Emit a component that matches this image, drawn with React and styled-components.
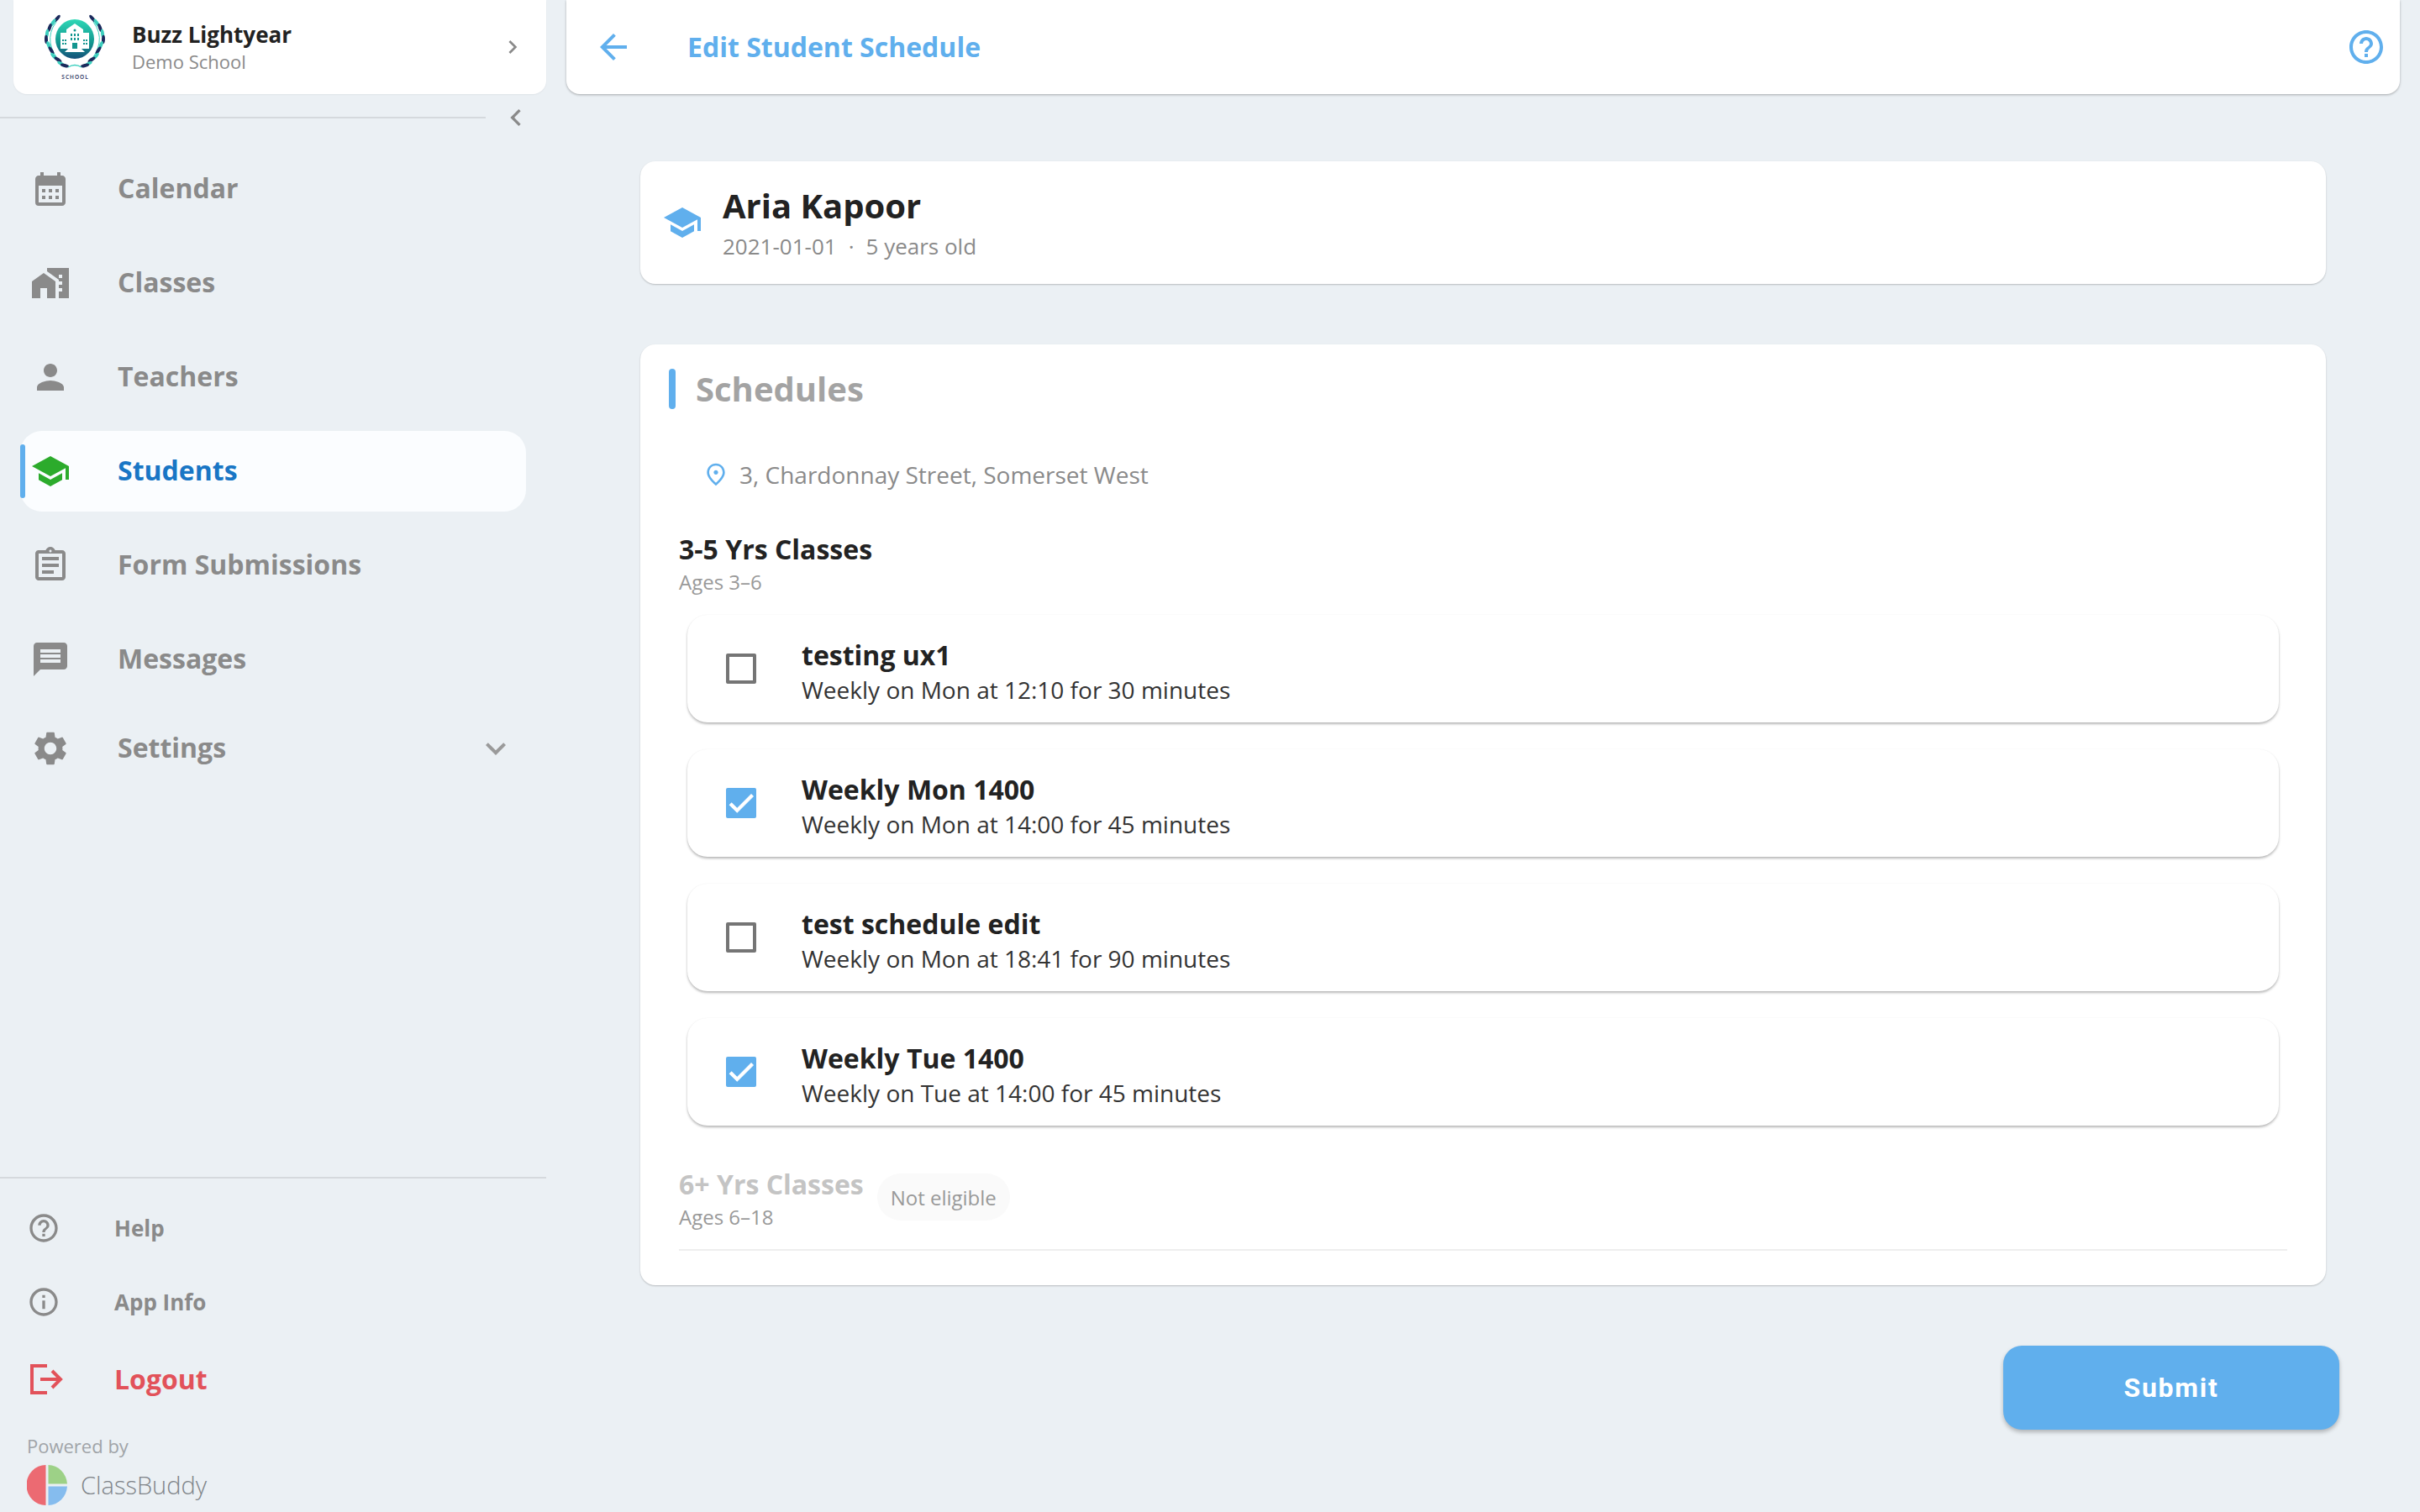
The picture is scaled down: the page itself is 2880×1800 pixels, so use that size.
import React from 'react';
import styled, { createGlobalStyle } from 'styled-components';
import {
  MdArrowBack,
  MdCalendarMonth,
  MdCheck,
  MdChevronLeft,
  MdChevronRight,
  MdExpandMore,
  MdHelpOutline,
  MdInfoOutline,
  MdMapsHomeWork,
  MdMessage,
  MdOutlineAssignment,
  MdOutlinePlace,
  MdPerson,
  MdSchool,
  MdSettings,
} from 'react-icons/md';

const blue = '#60afed';
const grey = '#8a8a8a';
const ink = '#222222';

const GlobalStyle = createGlobalStyle`
  html, body {
    margin: 0;
    padding: 0;
    background: #ebf0f4;
    font-family: 'Open Sans', 'Noto Sans', sans-serif;
  }
  * {
    box-sizing: border-box;
  }
`;

const Page = styled.div`
  display: flex;
  width: 2880px;
  height: 1800px;
  overflow: hidden;
  background: #ebf0f4;
`;

const Sidebar = styled.aside`
  display: flex;
  flex-direction: column;
  width: 674px;
  height: 100%;
  flex-shrink: 0;
`;

const ProfileCard = styled.div`
  display: flex;
  align-items: center;
  width: 634px;
  height: 112px;
  margin-left: 16px;
  padding: 0 24px 0 36px;
  background: #fff;
  border-radius: 0 0 16px 16px;
  box-shadow: 0 1px 2px rgba(0, 0, 0, 0.05);
  color: ${grey};
`;

const ProfileText = styled.div`
  display: flex;
  flex-direction: column;
  flex: 1;
  margin-left: 31px;
`;

const ProfileName = styled.span`
  font-size: 26px;
  line-height: 34px;
  font-weight: 700;
  color: ${ink};
  margin-top: -1px;
`;

const ProfileSchool = styled.span`
  font-size: 22px;
  line-height: 30px;
  font-weight: 400;
  color: ${grey};
`;

const CollapseRow = styled.div`
  display: flex;
  align-items: center;
  height: 56px;
  color: ${grey};
`;

const Rule = styled.div`
  height: 2px;
  width: ${(p) => p.$width}px;
  background: #d5d9dd;
`;

const CollapseButton = styled.span`
  display: flex;
  margin-left: 16px;
  margin-top: -1px;
`;

const NavList = styled.nav`
  display: flex;
  flex-direction: column;
  gap: 16px;
  margin-top: 9px;
`;

const NavItem = styled.div`
  position: relative;
  display: flex;
  align-items: center;
  width: 602px;
  height: 96px;
  margin-left: 24px;
  margin-top: ${(p) => p.$nudge || 0}px;
  padding-left: 12px;
  border-radius: 26px;
  background: ${(p) => (p.$active ? '#fbfdff' : 'transparent')};
  color: ${(p) => (p.$active ? '#1976c5' : grey)};
  svg {
    flex-shrink: 0;
    color: ${(p) => (p.$active ? '#2cab2c' : grey)};
  }
`;

const ActiveMark = styled.span`
  position: absolute;
  left: 0;
  top: 16px;
  width: 6px;
  height: 64px;
  border-radius: 3px;
  background: ${blue};
`;

const NavLabel = styled.span`
  flex: 1;
  margin-left: 56px;
  padding-bottom: 2px;
  font-size: 32px;
  line-height: 44px;
  font-weight: 700;
`;

const NavChevron = styled.span`
  display: flex;
  margin-right: 12px;
  svg {
    color: #9a9a9a;
  }
`;

const SidebarFooter = styled.div`
  display: flex;
  flex-direction: column;
  margin-top: auto;
  padding-bottom: 8px;
`;

const FooterItems = styled.div`
  display: flex;
  flex-direction: column;
  padding-top: 15px;
`;

const FooterItem = styled.div`
  display: flex;
  align-items: center;
  height: ${(p) => (p.$danger ? 96 : 88)}px;
  padding-left: ${(p) => (p.$danger ? 36 : 32)}px;
  color: ${(p) => (p.$danger ? '#e2525a' : grey)};
`;

const FooterLabel = styled.span`
  margin-left: ${(p) => (p.$danger ? 60 : 64)}px;
  font-size: ${(p) => (p.$danger ? 32 : 26)}px;
  line-height: 40px;
  font-weight: 700;
`;

const PoweredBy = styled.div`
  margin: 16px 0 0 32px;
  font-size: 22px;
  line-height: 30px;
  font-weight: 400;
  color: #a0a4a8;
`;

const BrandRow = styled.div`
  display: flex;
  align-items: center;
  height: 48px;
  margin: 8px 0 0 32px;
`;

const BrandName = styled.span`
  margin-left: 16px;
  font-size: 29px;
  line-height: 40px;
  font-weight: 300;
  color: #7f8489;
`;

const Main = styled.main`
  display: flex;
  flex-direction: column;
  flex: 1;
  min-width: 0;
`;

const TopBar = styled.header`
  display: flex;
  align-items: center;
  height: 112px;
  margin-right: 24px;
  padding: 0 16px 0 32px;
  background: #fff;
  border-radius: 0 0 16px 16px;
  box-shadow: 0 1px 3px rgba(0, 0, 0, 0.3);
  color: ${blue};
`;

const TopTitle = styled.h1`
  flex: 1;
  margin: 0 0 0 64px;
  font-size: 32px;
  line-height: 44px;
  font-weight: 700;
`;

const Content = styled.div`
  display: flex;
  flex-direction: column;
  padding: 80px 112px 0 88px;
`;

const Card = styled.section`
  background: #fff;
  border-radius: 18px;
  box-shadow: 0 1px 2px rgba(0, 0, 0, 0.22);
`;

const StudentCard = styled(Card)`
  display: flex;
  align-items: center;
  height: 146px;
  padding-left: 26px;
  margin-bottom: 72px;
  color: ${blue};
`;

const StudentText = styled.div`
  display: flex;
  flex-direction: column;
  margin-left: 24px;
  padding-bottom: 2px;
`;

const StudentName = styled.h2`
  margin: 0;
  font-size: 40px;
  line-height: 56px;
  font-weight: 700;
  color: ${ink};
`;

const StudentMeta = styled.div`
  display: flex;
  gap: 14px;
  margin-top: 2px;
  font-size: 26px;
  line-height: 36px;
  color: ${grey};
`;

const ScheduleCard = styled(Card)`
  display: flex;
  flex-direction: column;
  padding: 29px 46px 41px;
`;

const SectionHeader = styled.div`
  display: flex;
  align-items: center;
  height: 48px;
  margin-left: -12px;
`;

const SectionMark = styled.span`
  width: 8px;
  height: 48px;
  border-radius: 4px;
  background: ${blue};
`;

const SectionTitle = styled.h3`
  margin: 0 0 0 24px;
  font-size: 40px;
  line-height: 48px;
  font-weight: 700;
  color: #a3a3a3;
`;

const Address = styled.div`
  display: flex;
  align-items: center;
  height: 40px;
  margin: 58px 0 0 28px;
  color: ${blue};
`;

const AddressText = styled.span`
  margin-left: 12px;
  font-size: 28px;
  line-height: 40px;
  color: ${grey};
`;

const GroupHeading = styled.div`
  font-size: 32px;
  line-height: 44px;
  font-weight: 700;
  color: ${(p) => (p.$muted ? '#c4c4c4' : ink)};
  margin-top: ${(p) => (p.$first ? 47 : 0)}px;
`;

const GroupAges = styled.div`
  font-size: 24px;
  line-height: 34px;
  color: #999;
`;

const RowList = styled.div`
  display: flex;
  flex-direction: column;
  gap: 32px;
  margin: 22px 10px 0;
`;

const Row = styled.label`
  display: flex;
  align-items: center;
  height: 128px;
  padding-left: 46px;
  background: #fff;
  border-radius: 24px;
  box-shadow: 0 2px 3px rgba(0, 0, 0, 0.28), 0 0 2px rgba(0, 0, 0, 0.03);
`;

const CheckBox = styled.span`
  display: flex;
  align-items: center;
  justify-content: center;
  width: 36px;
  height: 36px;
  flex-shrink: 0;
  border-radius: 2px;
  border: ${(p) => (p.$checked ? 'none' : '4px solid #757575')};
  background: ${(p) => (p.$checked ? blue : 'transparent')};
  color: #fff;
  svg {
    flex-shrink: 0;
    stroke: currentColor;
    stroke-width: 0.7;
  }
`;

const RowText = styled.div`
  display: flex;
  flex-direction: column;
  margin-left: 54px;
  padding-top: 6px;
`;

const RowTitle = styled.span`
  font-size: 32px;
  line-height: 44px;
  font-weight: 700;
  color: ${ink};
`;

const RowDetail = styled.span`
  font-size: 28px;
  line-height: 38px;
  color: #333;
`;

const IneligibleGroup = styled.div`
  display: flex;
  align-items: center;
  margin-top: 48px;
`;

const Chip = styled.span`
  display: flex;
  align-items: center;
  justify-content: center;
  width: 158px;
  height: 56px;
  margin: -4px 0 0 16px;
  border-radius: 28px;
  background: #fafafa;
  font-size: 24px;
  color: #999;
`;

const Divider = styled.div`
  height: 2px;
  margin-top: 21px;
  background: #eeeeee;
`;

const SubmitRow = styled.div`
  display: flex;
  justify-content: flex-end;
  margin: 72px -16px 0 0;
`;

const SubmitButton = styled.button`
  width: 400px;
  height: 100px;
  border: none;
  border-radius: 22px;
  background: ${blue};
  color: #fff;
  font-family: Roboto, sans-serif;
  font-size: 32px;
  font-weight: 700;
  letter-spacing: 1.7px;
  box-shadow: 0 3px 5px rgba(0, 0, 0, 0.25);
`;

const navItems = [
  { label: 'Calendar', Icon: MdCalendarMonth },
  { label: 'Classes', Icon: MdMapsHomeWork },
  { label: 'Teachers', Icon: MdPerson },
  { label: 'Students', Icon: MdSchool, active: true },
  { label: 'Form Submissions', Icon: MdOutlineAssignment },
  { label: 'Messages', Icon: MdMessage },
  { label: 'Settings', Icon: MdSettings, nudge: -6, expandable: true },
];

const schedules = [
  { title: 'testing ux1', detail: 'Weekly on Mon at 12:10 for 30 minutes' },
  { title: 'Weekly Mon 1400', detail: 'Weekly on Mon at 14:00 for 45 minutes', checked: true },
  { title: 'test schedule edit', detail: 'Weekly on Mon at 18:41 for 90 minutes' },
  { title: 'Weekly Tue 1400', detail: 'Weekly on Tue at 14:00 for 45 minutes', checked: true },
];

const navy = '#1b2a5c';
const teal = '#3ccfbe';

// leaves of one half of the wreath, drawn for the left side and mirrored
const leaves = [
  { x: 67, y: 24, r: 40, c: navy },
  { x: 62, y: 29, r: 35, c: teal },
  { x: 58, y: 35, r: 20, c: navy },
  { x: 55, y: 42, r: 8, c: teal },
  { x: 54, y: 49, r: -2, c: navy },
  { x: 57, y: 56, r: -22, c: teal },
  { x: 60, y: 62, r: -32, c: navy },
  { x: 63, y: 69, r: -40, c: teal },
  { x: 68, y: 73, r: -55, c: navy },
  { x: 72, y: 78, r: -60, c: teal },
  { x: 76, y: 80, r: -75, c: navy },
];

function SchoolLogo() {
  return (
    <svg width='74' height='80' viewBox='51 18 74 80' aria-hidden='true'>
      <defs>
        <linearGradient id='crest' x1='0' y1='0' x2='0' y2='1'>
          <stop offset='0' stopColor='#2ed8b6' />
          <stop offset='0.6' stopColor='#12958f' />
          <stop offset='1' stopColor='#15517a' />
        </linearGradient>
      </defs>
      <path d='M66 28 Q48 52 74 80' fill='none' stroke={teal} strokeWidth='1' />
      <path d='M110 28 Q128 52 102 80' fill='none' stroke={teal} strokeWidth='1' />
      {leaves.map((l, i) => (
        <g key={i}>
          <ellipse cx={l.x} cy={l.y} rx='2' ry='5.2' fill={l.c} transform={`rotate(${l.r} ${l.x} ${l.y})`} />
          <ellipse cx={176 - l.x} cy={l.y} rx='2' ry='5.2' fill={l.c} transform={`rotate(${-l.r} ${176 - l.x} ${l.y})`} />
        </g>
      ))}
      <path d='M80 82 Q88 77 96 82' fill='none' stroke={teal} strokeWidth='1.4' />
      <ellipse cx='88' cy='48.5' rx='23' ry='23.5' fill='url(#crest)' />
      <path d='M88 30 L98 37 V41 H105 V60 H71 V41 H78 V37 Z' fill='#fff' />
      <circle cx='88' cy='38' r='1.5' fill='#12958f' />
      <g fill='#12958f'>
        <rect x='83' y='42' width='2' height='3' />
        <rect x='87' y='42' width='2' height='3' />
        <rect x='91' y='42' width='2' height='3' />
        <rect x='83' y='47' width='2' height='3' />
        <rect x='87' y='47' width='2' height='3' />
        <rect x='91' y='47' width='2' height='3' />
        <rect x='73' y='49' width='2' height='2' />
        <rect x='76' y='49' width='2' height='2' />
        <rect x='73' y='53' width='2' height='2' />
        <rect x='76' y='53' width='2' height='2' />
        <rect x='98' y='49' width='2' height='2' />
        <rect x='101' y='49' width='2' height='2' />
        <rect x='98' y='53' width='2' height='2' />
        <rect x='101' y='53' width='2' height='2' />
        <rect x='85' y='53' width='6' height='7' />
      </g>
      <path d='M80 60 H96 L100 64 H76 Z' fill='#fff' />
      <text x='88.5' y='96' textAnchor='middle' fontFamily='Open Sans, sans-serif' fontWeight='600' fontSize='6.5' letterSpacing='1' fill={navy}>
        SCHOOL
      </text>
    </svg>
  );
}

function LogoutIcon() {
  return (
    <svg width='40' height='40' viewBox='0 0 40 40' fill='none' stroke='currentColor' strokeWidth='4' aria-hidden='true'>
      <path d='M20 4H2V36H20' />
      <path d='M12 20H36' />
      <path d='M26 10L36 20L26 30' />
    </svg>
  );
}

function BrandLogo() {
  return (
    <svg width='48' height='48' viewBox='0 0 48 48' aria-hidden='true'>
      <path d='M22.5 0 A 23 24 0 0 0 22.5 48 Z' fill='#ec6a72' />
      <path d='M25.5 0 A 23 24 0 0 1 48 22.5 H25.5 Z' fill='#9dd187' />
      <path d='M25.5 48 A 23 24 0 0 0 48 25.5 H25.5 Z' fill='#85bcee' />
    </svg>
  );
}

export default function App() {
  return (
    <Page>
      <GlobalStyle />
      <Sidebar>
        <ProfileCard>
          <SchoolLogo />
          <ProfileText>
            <ProfileName>Buzz Lightyear</ProfileName>
            <ProfileSchool>Demo School</ProfileSchool>
          </ProfileText>
          <MdChevronRight size={32} />
        </ProfileCard>
        <CollapseRow>
          <Rule $width={578} />
          <CollapseButton>
            <MdChevronLeft size={40} />
          </CollapseButton>
        </CollapseRow>
        <NavList>
          {navItems.map(({ label, Icon, active, nudge, expandable }) => (
            <NavItem key={label} $active={active} $nudge={nudge}>
              {active && <ActiveMark />}
              <Icon size={48} />
              <NavLabel>{label}</NavLabel>
              {expandable && (
                <NavChevron>
                  <MdExpandMore size={48} />
                </NavChevron>
              )}
            </NavItem>
          ))}
        </NavList>
        <SidebarFooter>
          <Rule $width={650} />
          <FooterItems>
            <FooterItem>
              <MdHelpOutline size={40} />
              <FooterLabel>Help</FooterLabel>
            </FooterItem>
            <FooterItem>
              <MdInfoOutline size={40} />
              <FooterLabel>App Info</FooterLabel>
            </FooterItem>
            <FooterItem $danger>
              <LogoutIcon />
              <FooterLabel $danger>Logout</FooterLabel>
            </FooterItem>
          </FooterItems>
          <PoweredBy>Powered by</PoweredBy>
          <BrandRow>
            <BrandLogo />
            <BrandName>ClassBuddy</BrandName>
          </BrandRow>
        </SidebarFooter>
      </Sidebar>
      <Main>
        <TopBar>
          <MdArrowBack size={48} />
          <TopTitle>Edit Student Schedule</TopTitle>
          <MdHelpOutline size={48} />
        </TopBar>
        <Content>
          <StudentCard>
            <MdSchool size={48} />
            <StudentText>
              <StudentName>Aria Kapoor</StudentName>
              <StudentMeta>
                <span>2021-01-01</span>
                <span>·</span>
                <span>5 years old</span>
              </StudentMeta>
            </StudentText>
          </StudentCard>
          <ScheduleCard>
            <SectionHeader>
              <SectionMark />
              <SectionTitle>Schedules</SectionTitle>
            </SectionHeader>
            <Address>
              <MdOutlinePlace size={32} />
              <AddressText>3, Chardonnay Street, Somerset West</AddressText>
            </Address>
            <GroupHeading $first>3-5 Yrs Classes</GroupHeading>
            <GroupAges>Ages 3–6</GroupAges>
            <RowList>
              {schedules.map(({ title, detail, checked }) => (
                <Row key={title}>
                  <CheckBox $checked={checked}>{checked && <MdCheck size={38} />}</CheckBox>
                  <RowText>
                    <RowTitle>{title}</RowTitle>
                    <RowDetail>{detail}</RowDetail>
                  </RowText>
                </Row>
              ))}
            </RowList>
            <IneligibleGroup>
              <div>
                <GroupHeading $muted>6+ Yrs Classes</GroupHeading>
                <GroupAges>Ages 6–18</GroupAges>
              </div>
              <Chip>Not eligible</Chip>
            </IneligibleGroup>
            <Divider />
          </ScheduleCard>
          <SubmitRow>
            <SubmitButton type='button'>Submit</SubmitButton>
          </SubmitRow>
        </Content>
      </Main>
    </Page>
  );
}
